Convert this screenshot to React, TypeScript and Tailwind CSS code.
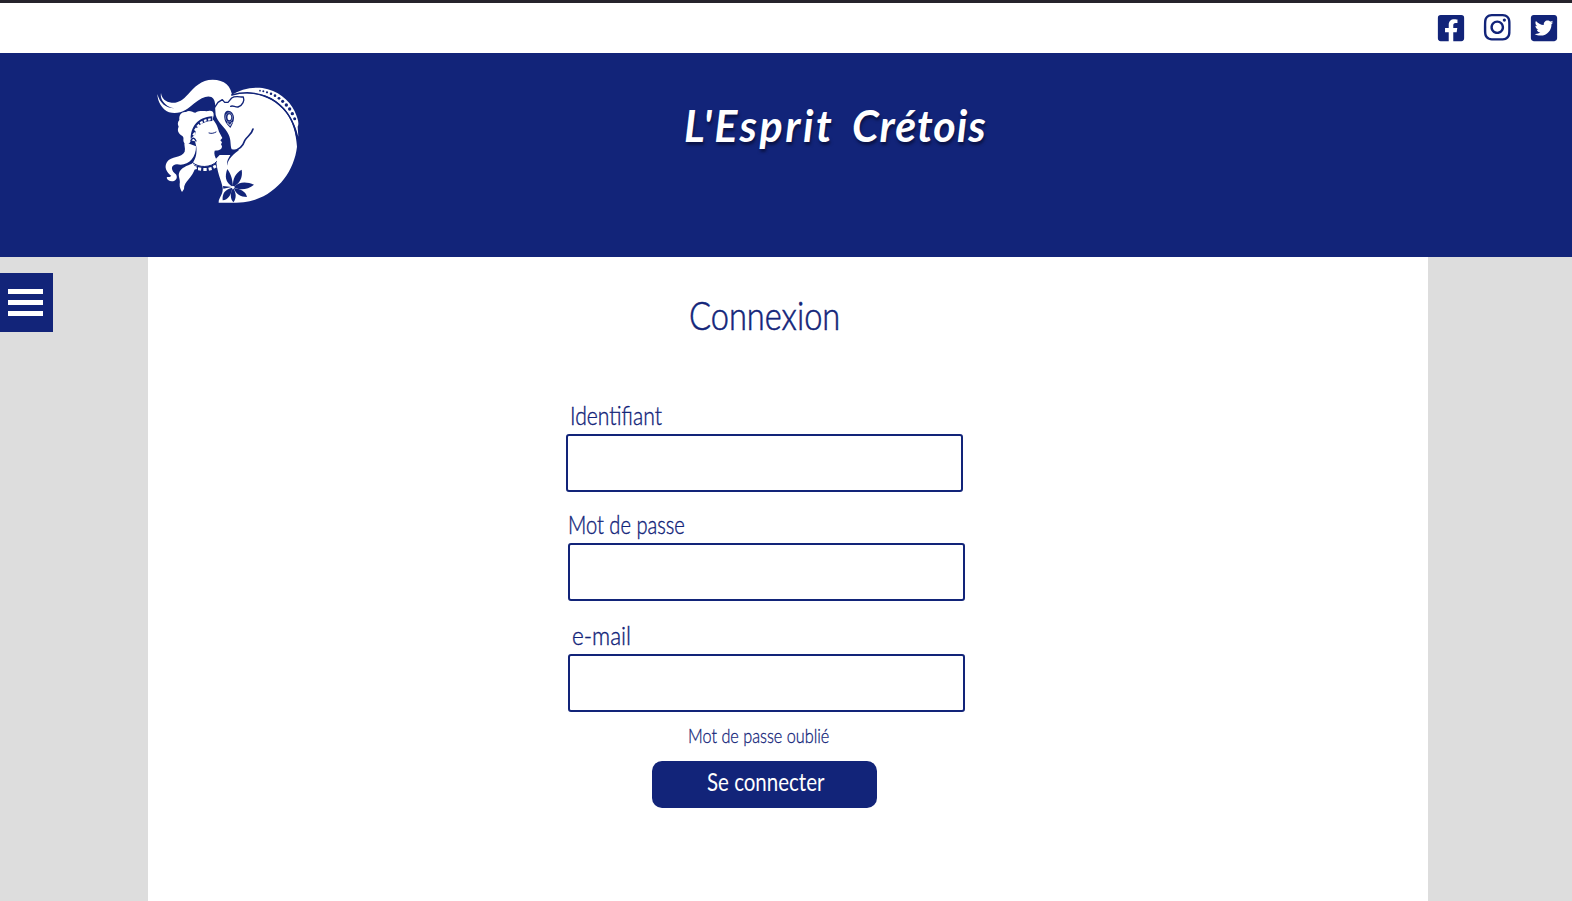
import React from "react";
import { FaFacebookSquare, FaInstagram, FaTwitterSquare } from "react-icons/fa";

function Logo() {
  return (
    <svg viewBox="0 0 495 435" className="h-[145px] w-[165px]" role="img" aria-label="L'Esprit Crétois">
      <g fill="#fff">
        {/* horn */}
        <path d="M37 72C38 95 50 117 72 127C105 136 128 117 148 100C168 83 186 76 199 81C208 86 210 94 211 110L262 82C260 48 238 29 203 29C168 29 148 52 130 72C112 92 97 100 80 98C62 96 50 86 48 69C45 84 53 97 68 108C77 113 84 114 88 115C62 115 44 98 37 72Z" />
        {/* mane */}
        <path d="M258 76C285 58 322 50 352 54C398 61 432 89 449 124C459 147 463 160 458 170L460 200C448 150 421 108 380 85C345 66 300 65 258 76Z" />
        {/* bull head and body */}
        <path d="M210 108L219 98C235 83 268 70 300 70C350 70 394 92 422 127C444 155 453 190 456 230C448 300 402 365 330 389C305 397 280 399 221 398C220 383 235 375 233 353C229 330 215 306 213 266L224 255L256 255C248 268 244 278 247 287C246 270 268 250 282 241L260 238C255 225 259 210 251 194C241 172 218 158 212 135Z" />
        {/* face and hair */}
        <path d="M103 150C101 132 112 124 123 126C132 118 144 127 151 128C165 119 182 125 190 123C200 121 207 125 206 136L203 148C216 163 218 173 222 185L232 204L226 211L231 217L228 223L231 229C231 240 220 242 209 242C206 251 210 261 216 272C202 295 158 292 141 281C153 267 156 249 154 230L150 214L137 211C137 221 126 226 118 219C112 211 119 203 112 198C99 190 96 180 101 170C97 163 98 155 103 150Z" />
        {/* ponytail */}
        <path d="M119 216C116 226 122 234 119 245C110 264 78 257 66 276C56 293 65 306 79 318C71 324 68 319 65 323C67 331 76 336 87 333C99 329 97 314 89 310C75 297 80 284 96 283C126 291 154 265 153 229Z" />
        <path d="M143 280C126 288 107 293 102 310C99 320 107 330 104 342C103 353 108 360 111 366L117 357C116 333 144 324 151 290Z" />
      </g>
      {/* ear and brow */}
      <g fill="none" stroke="#122479" strokeLinecap="round" strokeLinejoin="round">
        <path strokeWidth="4" d="M209 112L219 97L232 89L239 97L249 97L260 84C271 76 286 82 295 81C299 91 294 106 279 111C270 112 263 105 257 109" />
        <path strokeWidth="4" d="M260 75C305 62 354 68 390 94C428 121 449 159 456 204" />
        <path strokeWidth="5" d="M324 177C320 194 306 199 299 212C294 228 284 238 265 243" />
        <path strokeWidth="3" d="M192 189C201 192 207 189 213 186" />
        <path strokeWidth="3" d="M143 278C161 294 197 294 215 275" />
        <path strokeWidth="4" d="M138 211C144 199 150 207 153 213" />
      </g>
      {/* eye */}
      <path fill="#122479" d="M248 122C258 121 267 131 267 143C267 155 261 164 256 174C250 166 239 158 238 143C237 132 240 123 248 122Z" />
      <ellipse cx="252" cy="142" rx="10.5" ry="14" fill="none" stroke="#fff" strokeOpacity="0.6" strokeWidth="2" />
      <ellipse cx="253" cy="142" rx="5.5" ry="9" fill="#fff" />
      <path fill="none" stroke="#fff" strokeWidth="2.5" d="M246 158C250 161 253 163 255 167C257 162 260 160 262 156" />
      <g fill="#122479">
        <path d="M137 206C138 171 156 142 202 139L202 153C170 154 150 171 151 193Z" />
        <path d="M264 351C240 338 239 318 247 297C260 315 263 334 264 351Z" />
        <path d="M264 351C262 326 272 309 290 299C294 322 284 341 264 351Z" />
        <path d="M266 352C284 333 306 336 327 344C309 358 287 363 266 352Z" />
        <path d="M266 354C287 357 302 364 306 381C286 381 273 372 266 354Z" />
        <path d="M264 354C275 370 274 386 265 397C255 386 255 369 264 354Z" />
        <path d="M262 353C259 375 249 389 233 391C231 370 240 358 262 353Z" />
        <path d="M234 348L260 351L235 356Z" />
      </g>
      <g fill="#fff">
        <circle cx="264" cy="352" r="4" />
        <path d="M144 291l10-3 2 9-9 2zM159 292l10 1-1 9-9-1zM175 294l10 0 0 9-10 0zM190 293l9-2 2 9-9 2zM203 288l8-4 4 8-8 4z" />
        <path d="M142 194l6-8 4 5-5 6zM147 180l6-8 5 5-6 7zM154 168l7-7 4 6-6 5zM164 157l8-5 2 7-7 4zM176 150l8-3 1 7-7 2zM189 146l8-1 0 6-7 1z" />
      </g>
      <g fill="#122479">
        <circle cx="345" cy="62" r="2.5" />
        <circle cx="355" cy="64" r="3" />
        <circle cx="366" cy="67" r="3.3" />
        <circle cx="378" cy="71" r="3.7" />
        <circle cx="390" cy="77" r="4" />
        <circle cx="402" cy="85" r="4.3" />
        <circle cx="413" cy="94" r="4.7" />
        <circle cx="424" cy="105" r="5" />
        <circle cx="434" cy="117" r="5" />
        <circle cx="442" cy="131" r="5" />
        <circle cx="449" cy="146" r="4.5" />
      </g>
    </svg>
  );
}

function Field({ label, id, labelClass }: { label: string; id: string; labelClass: string }) {
  return (
    <div className="flex h-[94px] w-[397px] flex-col">
      <label
        htmlFor={id}
        className={"block h-9 origin-left self-start whitespace-nowrap text-[25px] leading-[34px] font-light [-webkit-text-stroke:0.4px_#122479] " + labelClass}
      >
        {label}
      </label>
      <input id={id} className="h-[58px] w-[397px] shrink-0 rounded-[3px] border-2 border-[#122479] bg-white px-3 outline-none" />
    </div>
  );
}

export default function App() {
  return (
    <div className="flex h-[901px] w-full flex-col overflow-hidden bg-[#dddddd] font-['Lato',sans-serif] text-[#122479]">
      <div className="flex h-[53px] shrink-0 items-center justify-end gap-[17px] border-t-[3px] border-[#26232c] bg-white pr-[13px] pb-px">
        <FaFacebookSquare className="mr-[-1px] h-[30px] w-[30px]" />
        <FaInstagram className="h-[30.5px] w-[30.5px]" />
        <FaTwitterSquare className="h-[30px] w-[30px]" />
      </div>
      <header className="flex h-[204px] shrink-0 bg-[#122479] pt-[17px] pl-[145px]">
        <Logo />
        <h1 className="ml-[374px] flex h-[75px] pt-[23px] text-[43px] leading-[66px] font-bold text-white italic [text-shadow:1px_3px_3px_rgba(0,0,20,0.5)]">
          <span className="block w-[168px] tracking-[2.5px]">L'Esprit</span>
          <span className="block tracking-[1px]">Crétois</span>
        </h1>
      </header>
      <div className="flex flex-1">
        <aside className="w-[148px] shrink-0 pt-4">
          <button aria-label="Menu" className="flex h-[59px] w-[53px] flex-col gap-[6px] bg-[#122479] pt-4 pl-2">
            <span className="h-[5px] w-[35px] bg-white" />
            <span className="h-[5px] w-[35px] bg-white" />
            <span className="h-[5px] w-[35px] bg-white" />
          </button>
        </aside>
        <main className="w-[1280px] shrink-0 bg-white pl-[418px]">
          <form className="flex flex-col items-start">
            <h2 className="mt-[28px] ml-[123px] h-[62px] origin-left scale-x-[0.815] text-[40px] leading-[60px] font-light [-webkit-text-stroke:0.6px_#122479]">
              Connexion
            </h2>
            <div className="mt-[51px] flex flex-col">
              <Field id="user" label="Identifiant" labelClass="ml-[4px] scale-x-[0.845]" />
              <div className="mt-[15px] ml-[2px]">
                <Field id="password" label="Mot de passe" labelClass="scale-x-[0.805]" />
              </div>
              <div className="mt-[17px] ml-[2px]">
                <Field id="email" label="e-mail" labelClass="ml-[4px] scale-x-[0.9]" />
              </div>
            </div>
            <a className="mt-[8px] ml-[122px] h-[32px] origin-left scale-x-[0.812] text-[20px] leading-[30px] font-light [-webkit-text-stroke:0.3px_#122479]">
              Mot de passe oublié
            </a>
            <button type="button" className="mt-[9px] ml-[86px] flex h-[47px] w-[225px] rounded-[10px] bg-[#122479] pl-[55px] text-[25px] leading-[41px] text-white">
              <span className="block origin-left scale-x-[0.82] whitespace-nowrap">Se connecter</span>
            </button>
          </form>
        </main>
      </div>
    </div>
  );
}
